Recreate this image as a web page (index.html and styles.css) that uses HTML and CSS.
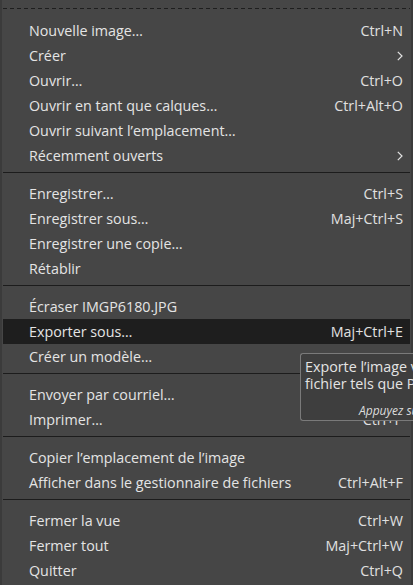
FILE: index.html
```html
<!DOCTYPE html>
<html lang="fr">
<head>
<meta charset="utf-8">
<title>Fichier</title>
<link rel="stylesheet" href="styles.css">
</head>
<body>
<div class="menu">
  <div class="tearoff"><div class="dash"></div></div>
  <div class="item"><span class="label">Nouvelle image…</span><span class="accel">Ctrl+N</span></div>
  <div class="item"><span class="label">Créer</span><svg class="arrow" width="6" height="10" viewBox="0 0 6 10"><path d="M0.8 0.8 L5 5 L0.8 9.2" fill="none" stroke="#e2e2e2" stroke-width="1.2"/></svg></div>
  <div class="item"><span class="label">Ouvrir…</span><span class="accel">Ctrl+O</span></div>
  <div class="item"><span class="label">Ouvrir en tant que calques…</span><span class="accel">Ctrl+Alt+O</span></div>
  <div class="item"><span class="label">Ouvrir suivant l’emplacement…</span></div>
  <div class="item"><span class="label">Récemment ouverts</span><svg class="arrow" width="6" height="10" viewBox="0 0 6 10"><path d="M0.8 0.8 L5 5 L0.8 9.2" fill="none" stroke="#e2e2e2" stroke-width="1.2"/></svg></div>
  <div class="sep"></div>
  <div class="item"><span class="label">Enregistrer…</span><span class="accel">Ctrl+S</span></div>
  <div class="item"><span class="label">Enregistrer sous…</span><span class="accel">Maj+Ctrl+S</span></div>
  <div class="item"><span class="label">Enregistrer une copie…</span></div>
  <div class="item"><span class="label">Rétablir</span></div>
  <div class="sep"></div>
  <div class="item"><span class="label">Écraser IMGP6180.JPG</span></div>
  <div class="item active"><span class="label">Exporter sous…</span><span class="accel">Maj+Ctrl+E</span></div>
  <div class="item"><span class="label">Créer un modèle…</span></div>
  <div class="sep"></div>
  <div class="item"><span class="label">Envoyer par courriel…</span></div>
  <div class="item"><span class="label">Imprimer…</span><span class="accel">Ctrl+P</span></div>
  <div class="sep"></div>
  <div class="item"><span class="label">Copier l’emplacement de l’image</span></div>
  <div class="item"><span class="label">Afficher dans le gestionnaire de fichiers</span><span class="accel">Ctrl+Alt+F</span></div>
  <div class="sep"></div>
  <div class="item"><span class="label">Fermer la vue</span><span class="accel">Ctrl+W</span></div>
  <div class="item"><span class="label">Fermer tout</span><span class="accel">Maj+Ctrl+W</span></div>
  <div class="item"><span class="label">Quitter</span><span class="accel">Ctrl+Q</span></div>
</div>
<div class="tooltip">
  <div class="tip-text">Exporte l’image vers différents formats de<br>fichier tels que PNG ou JPEG</div>
  <div class="tip-help">Appuyez sur F1 pour obtenir de l’aide</div>
</div>
</body>
</html>
```
FILE: styles.css
```css
html, body {
  margin: 0;
  padding: 0;
  overflow: hidden;
  width: 413px;
  height: 585px;
  background: #464646;
}
body {
  font-family: "Open Sans", "DejaVu Sans", sans-serif;
  font-size: 14.3px;
  color: #e4e4e4;
  position: relative;
}
.menu {
  box-sizing: border-box;
  width: 413px;
  height: 585px;
  border-left: 2px solid #3b3b3b;
  border-right: 2px solid #3b3b3b;
  padding: 0 1px;
  display: flex;
  flex-direction: column;
}
.tearoff {
  flex: none;
  height: 18px;
  padding-top: 8px;
  box-sizing: border-box;
}
.dash {
  height: 1px;
  background: repeating-linear-gradient(to right, #1e1e1e 0 4px, transparent 4px 7px);
}
.item {
  height: 25px;
  flex: none;
  display: flex;
  align-items: center;
  justify-content: space-between;
  padding: 0 7px 0 26px;
  white-space: nowrap;
}
.item.active {
  background: #1e1e1e;
}
.accel {
  color: #e0e0e0;
}
.arrow {
  display: block;
}
.sep {
  flex: none;
  height: 13px;
  box-sizing: border-box;
  padding-top: 4px;
}
.sep::before {
  content: "";
  display: block;
  height: 1px;
  background: #1c1c1c;
}
.tooltip {
  position: absolute;
  left: 300px;
  top: 353px;
  width: 113px;
  height: 68px;
  box-sizing: border-box;
  border: 1px solid #7a7a7a;
  border-right: none;
  border-radius: 3px 0 0 3px;
  background: #3e3e3e;
  padding: 4px 0 0 4px;
  white-space: nowrap;
  overflow: hidden;
}
.tip-text {
  line-height: 17px;
  color: #e4e4e4;
}
.tip-help {
  font-style: italic;
  font-size: 12px;
  color: #dcdcdc;
  margin-top: 10px;
  padding-left: 54px;
}
```
